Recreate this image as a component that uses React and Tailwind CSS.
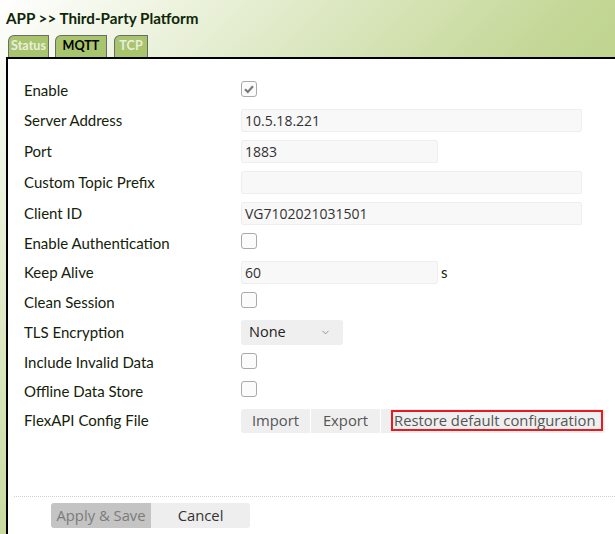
import { ChevronDown } from "lucide-react";

const labelFont = "font-['Lato','Liberation_Sans',sans-serif]";
const valueFont = "font-['Open_Sans','Noto_Sans',sans-serif]";

function CheckBox({ checked }) {
  return (
    <div className="mb-1 flex h-4 w-4 items-center justify-center rounded-[3px] border border-[#a9a9a9] bg-[#fbfbfb]">
      {checked && (
        <svg width="12" height="12" viewBox="0 0 12 12">
          <path d="M2 6.2 L4.8 9 L10 3.2" fill="none" stroke="#7a7a7a" strokeWidth="2.2" />
        </svg>
      )}
    </div>
  );
}

function TextInput({ value, wide = true }) {
  return (
    <div
      className={`${wide ? "w-[341px]" : "w-[197px]"} flex h-[23px] items-center rounded-[2px] border border-[#eeeeee] bg-[#f8f8f8] pl-[3px] text-[14px] text-[#333] ${valueFont}`}
    >
      {value}
    </div>
  );
}

function Row({ label, h = "h-[29px]", children }) {
  return (
    <div className={`flex ${h} items-center`}>
      <div className={`w-[217px] text-[15px] text-[#14220a] ${labelFont}`}>{label}</div>
      <div className="flex items-center">{children}</div>
    </div>
  );
}

function Tab({ label, active, width }) {
  return (
    <div
      className={`${width} flex h-[22px] items-center justify-center rounded-tl-[6px] border-l border-t border-r border-[#6b6b6b] bg-[#a8c46d] text-[12.6px] font-bold ${
        active ? "text-black" : "text-[#e9efdf]"
      } ${labelFont}`}
    >
      {label}
    </div>
  );
}

export default function App() {
  return (
    <div className="flex min-h-[534px] w-full flex-col bg-[linear-gradient(135deg,#ffffff_0%,#c5d898_50%,#a4c263_100%)]">
      {/* header */}
      <div className={`h-[35px] pl-[6px] pt-[7px] text-[15.2px] font-bold text-[#0f2608] ${labelFont}`}>
        APP &gt;&gt; Third-Party Platform
      </div>
      <div className="flex h-[22px] items-end pl-[8px]">
        <Tab label="Status" width="w-[41px]" />
        <div className="w-[6px]" />
        <Tab label="MQTT" width="w-[52px]" active />
        <div className="w-[7px]" />
        <Tab label="TCP" width="w-[34px]" />
      </div>

      {/* panel */}
      <div className="ml-[6px] flex flex-1 flex-col border-l-2 border-t-2 border-black bg-white">
        <div className="flex flex-col pl-4 pt-[17px]">
          <Row label="Enable">
            <CheckBox checked />
          </Row>
          <Row label="Server Address" h="h-[31px]">
            <TextInput value="10.5.18.221" />
          </Row>
          <Row label="Port" h="h-[31px]">
            <TextInput value="1883" wide={false} />
          </Row>
          <Row label="Custom Topic Prefix" h="h-[31px]">
            <TextInput value="" />
          </Row>
          <Row label="Client ID" h="h-[31px]">
            <TextInput value="VG7102021031501" />
          </Row>
          <Row label="Enable Authentication" h="h-[28px]">
            <CheckBox />
          </Row>
          <Row label="Keep Alive" h="h-[31px]">
            <TextInput value="60" wide={false} />
            <span className={`ml-[3px] text-[15px] text-[#14220a] ${labelFont}`}>s</span>
          </Row>
          <Row label="Clean Session" h="h-[28px]">
            <CheckBox />
          </Row>
          <Row label="TLS Encryption" h="h-[32px]">
            <div
              className={`flex h-[25px] w-[102px] items-center justify-between rounded-[3px] bg-[#efefef] pl-2 pr-3 text-[14.5px] text-[#222] ${valueFont}`}
            >
              None
              <ChevronDown size={11} className="text-[#888]" />
            </div>
          </Row>
          <Row label="Include Invalid Data" h="h-[29px]">
            <CheckBox />
          </Row>
          <Row label="Offline Data Store" h="h-[28px]">
            <CheckBox />
          </Row>
          <Row label="FlexAPI Config File" h="h-[31px]">
            <div className={`flex h-[24px] gap-px text-[14.8px] text-[#555] ${valueFont}`}>
              <div className="flex w-[69px] items-center justify-center rounded-l-[3px] bg-[#efefef]">Import</div>
              <div className="flex w-[69px] items-center justify-center bg-[#efefef]">Export</div>
              <div className="flex w-[224px] items-center rounded-r-[3px] bg-[#efefef] pl-[10px] pr-[2px]">
                <span className="flex h-[21px] w-full items-center border-2 border-[#e8191f] pl-[1px]">
                  Restore default configuration
                </span>
              </div>
            </div>
          </Row>
        </div>

        {/* footer */}
        <div className="ml-[6px] mt-[60px] border-t border-dotted border-[#d0d0d0] pl-[37px] pt-[6px]">
          <div className={`flex h-[25px] text-[14.8px] ${valueFont}`}>
            <div className="flex w-[100px] items-center justify-center rounded-l-[3px] bg-[#c4c4c4] text-[#7b7b7b]">
              Apply &amp; Save
            </div>
            <div className="flex w-[99px] items-center justify-center rounded-r-[3px] bg-[#eeeeee] text-[#333]">
              Cancel
            </div>
          </div>
        </div>
      </div>
    </div>
  );
}
